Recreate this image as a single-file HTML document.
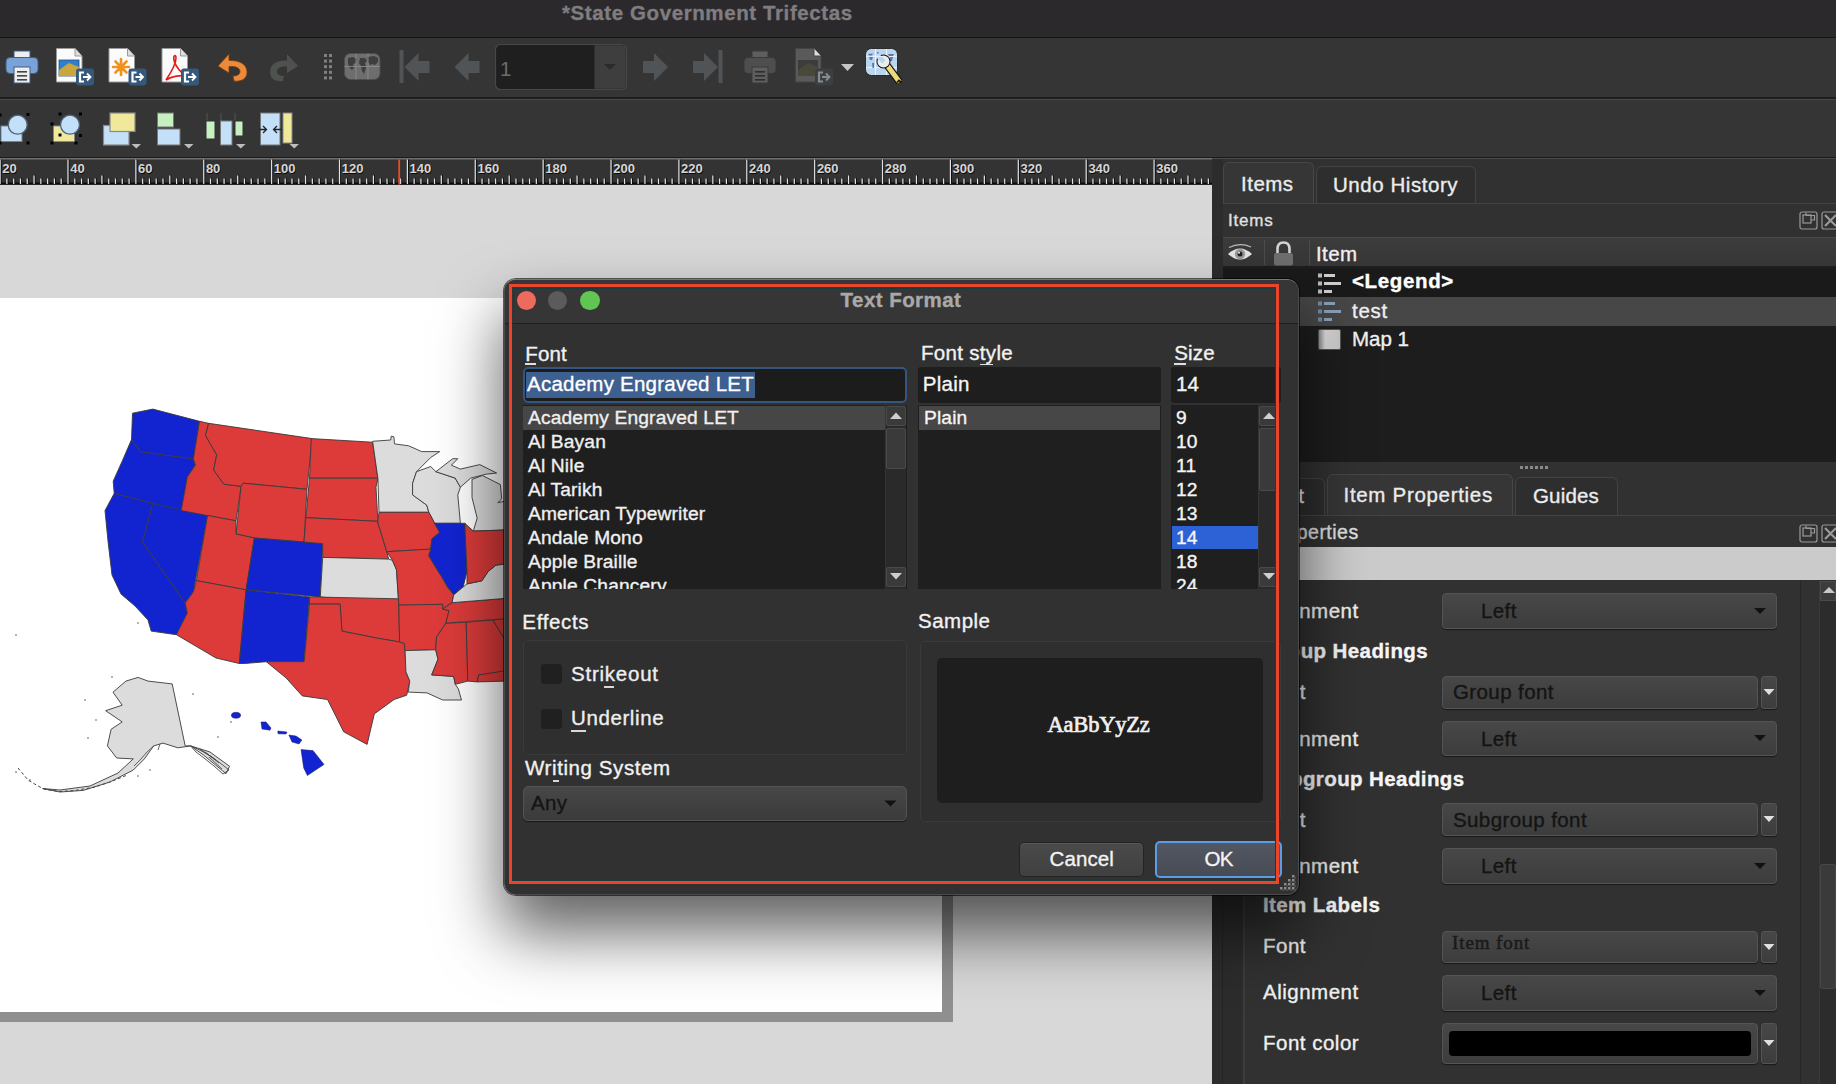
<!DOCTYPE html>
<html><head><meta charset="utf-8">
<style>
*{box-sizing:border-box;margin:0;padding:0}
html,body{width:1836px;height:1084px;overflow:hidden;background:#333;font-family:"Liberation Sans",sans-serif;color:#e6e6e6}
.a{position:absolute}
.t{position:absolute;white-space:nowrap;font-size:19px;letter-spacing:0.7px;line-height:1;-webkit-text-stroke:0.35px currentColor}
</style></head><body>
<!-- title bar -->
<div class="a" style="left:0;top:0;width:1836px;height:37px;background:#2c292d"></div>
<div class="a" style="left:0;top:37px;width:1836px;height:1px;background:#151515"></div>
<div class="t" style="left:562px;top:2.7px;font-size:20.5px;font-weight:bold;color:#7f7d7f;letter-spacing:0.6px">*State Government Trifectas</div>
<!-- toolbar 1 -->
<div class="a" style="left:0;top:38px;width:1836px;height:59px;background:#353535"></div>
<div class="a" style="left:0;top:97px;width:1836px;height:2px;background:#1e1e1e"></div>
<div class="a" style="left:0;top:99px;width:1836px;height:1px;background:#4a4a4a"></div>
<!-- toolbar 2 -->
<div class="a" style="left:0;top:100px;width:1836px;height:57px;background:#353535"></div>
<div class="a" style="left:0;top:157px;width:1836px;height:1px;background:#1a1a1a"></div>
<div class="a" style="left:0;top:158px;width:1836px;height:1px;background:#4a4a4a"></div>
<!--ICONS--><svg class="a" style="left:0;top:38px" width="920" height="120" viewBox="0 38 920 120"><rect x="14" y="51" width="16" height="8" fill="#eeeeee" stroke="#3f5f86" stroke-width="1"/><rect x="6" y="57.5" width="32" height="16" rx="4" fill="#7aa2d6" stroke="#3f5f86" stroke-width="1"/><rect x="14" y="67" width="16" height="16" fill="#eeeeee" stroke="#3f5f86" stroke-width="1"/><g fill="#444"><rect x="17" y="71" width="10" height="1.6"/><rect x="17" y="75" width="10" height="1.6"/><rect x="17" y="79" width="10" height="1.6"/></g><path d="M56.5 48.5H75L82 56V82H56.5Z" fill="#fbfbfb" stroke="#9a9a9a" stroke-width="1"/><path d="M75 48.5V56H82" fill="#ddd" stroke="#9a9a9a" stroke-width="1"/><rect x="59" y="60" width="20" height="16" fill="#2f7fd0" stroke="#24507a" stroke-width="0.8"/><path d="M59 70L69 63L79 67V76H59Z" fill="#c9a63e"/><rect x="76" y="68.5" width="18" height="17" rx="3" fill="#35597a"/><path d="M84 72.5H80V81.5H84" fill="none" stroke="#ffffff" stroke-width="2.2"/><path d="M83 77.0H90M87 73.5L90.5 77.0L87 80.5" fill="none" stroke="#ffffff" stroke-width="1.8"/><path d="M109.0 48.5H127.5L134.5 56V82H109.0Z" fill="#fbfbfb" stroke="#9a9a9a" stroke-width="1"/><path d="M127.5 48.5V56H134.5" fill="#ddd" stroke="#9a9a9a" stroke-width="1"/><g stroke="#f0921e" stroke-width="2.6" stroke-linecap="round"><path d="M121 59V75M113 67H129M115.5 61.5L126.5 72.5M126.5 61.5L115.5 72.5"/></g><circle cx="121" cy="67" r="2.5" fill="#f0921e"/><rect x="128.5" y="68.5" width="18" height="17" rx="3" fill="#35597a"/><path d="M136.5 72.5H132.5V81.5H136.5" fill="none" stroke="#ffffff" stroke-width="2.2"/><path d="M135.5 77.0H142.5M139.5 73.5L143.0 77.0L139.5 80.5" fill="none" stroke="#ffffff" stroke-width="1.8"/><path d="M162.0 48.5H180.5L187.5 56V82H162.0Z" fill="#fbfbfb" stroke="#9a9a9a" stroke-width="1"/><path d="M180.5 48.5V56H187.5" fill="#ddd" stroke="#9a9a9a" stroke-width="1"/><path d="M166 80C170 74 176 64 176 58C176 54 173 55 174 60C175 66 182 74 186 76C181 75 172 76 166 80Z" fill="none" stroke="#e0211a" stroke-width="1.6"/><rect x="181" y="68.5" width="18" height="17" rx="3" fill="#35597a"/><path d="M189 72.5H185V81.5H189" fill="none" stroke="#ffffff" stroke-width="2.2"/><path d="M188 77.0H195M192 73.5L195.5 77.0L192 80.5" fill="none" stroke="#ffffff" stroke-width="1.8"/><path d="M218 66L229 54V60.5C239 60 247 64 247 72C247 79 241 82 234 81L233 76C237 76 240 74.5 240 71.5C240 68 236 66 229 66.5V73Z" fill="#ea8a3a" stroke="#7a3e12" stroke-width="0.8"/><path d="M298 66L287 54V60.5C277 60 270 64 270 72C270 79 276 82 283 81L284 76C280 76 277 74.5 277 71.5C277 68 281 66 287 66.5V73Z" fill="#4d524f"/><g fill="#808080"><rect x="324" y="54.0" width="3" height="3"/><rect x="329" y="54.0" width="3" height="3"/><rect x="324" y="59.6" width="3" height="3"/><rect x="329" y="59.6" width="3" height="3"/><rect x="324" y="65.2" width="3" height="3"/><rect x="329" y="65.2" width="3" height="3"/><rect x="324" y="70.8" width="3" height="3"/><rect x="329" y="70.8" width="3" height="3"/><rect x="324" y="76.4" width="3" height="3"/><rect x="329" y="76.4" width="3" height="3"/></g><rect x="344.5" y="53.5" width="35.5" height="26" rx="6" fill="#6e6e6e" stroke="#4e4e4e"/><g fill="#3e3e3e"><path d="M348 58l5-1 4 2-1 4-3 1 1 4-2 2-3-3-1-4zM360 58l5 0 2 3-2 2 1 5-2 6-2-3-1-5-2-3zM367 57l7-1 4 2 0 4-3 3-3-1-2 1-2-3z"/></g><g stroke="#8a8a8a" stroke-width="0.9"><path d="M344.5 66.5H380M356 53.5V79.5M368 53.5V79.5"/></g><rect x="399.5" y="50" width="4" height="33" fill="#505457"/><path d="M404.5 67L418.5 53V61H429.5V73H418.5V81Z" fill="#505457"/><path d="M454.5 67L468.5 53V61H479.5V73H468.5V81Z" fill="#505457"/><path d="M668 67L654 53V61H643V73H654V81Z" fill="#505457"/><path d="M718 67L704 53V61H693V73H704V81Z" fill="#505457"/><rect x="718.5" y="50" width="4" height="33" fill="#505457"/><rect x="495.5" y="44.5" width="131" height="45" rx="5" fill="#1f1f1f" stroke="#474747" stroke-width="1.2"/><path d="M594.5 45.2H621A4.5 4.5 0 0 1 625.8 49.5V84.5A4.5 4.5 0 0 1 621 88.8H594.5Z" fill="#3e3e3e"/><path d="M604 64H616L610 70Z" fill="#2a2a2a"/><text x="500" y="75.5" font-family="Liberation Sans" font-size="20.5" fill="#6c6c6c">1</text><rect x="752" y="51" width="16" height="8" fill="#5e5e5e" stroke="#3a3a3a" stroke-width="1"/><rect x="744" y="57.5" width="32" height="16" rx="4" fill="#4e4e4e" stroke="#3a3a3a" stroke-width="1"/><rect x="752" y="67" width="16" height="16" fill="#5e5e5e" stroke="#3a3a3a" stroke-width="1"/><g fill="#2e2e2e"><rect x="755" y="71" width="10" height="1.6"/><rect x="755" y="75" width="10" height="1.6"/><rect x="755" y="79" width="10" height="1.6"/></g><path d="M795.5 48.5H814L821 56V82H795.5Z" fill="#5a5a5a" stroke="#444" stroke-width="1"/><path d="M814 48.5V56H821" fill="#ddd" stroke="#444" stroke-width="1"/><rect x="798" y="60" width="20" height="16" fill="#3c3c3c"/><path d="M798 70L808 63L818 67V76H798Z" fill="#4a4838"/><rect x="815" y="68.5" width="18" height="17" rx="3" fill="#3a3f44"/><path d="M823 72.5H819V81.5H823" fill="none" stroke="#8a8a8a" stroke-width="2.2"/><path d="M822 77.0H829M826 73.5L829.5 77.0L826 80.5" fill="none" stroke="#8a8a8a" stroke-width="1.8"/><path d="M841 64H854L847.5 71Z" fill="#c6c6c6"/><rect x="865.5" y="48.5" width="32" height="27" rx="6" fill="#bcd5ef" stroke="#1a1410" stroke-width="0.8"/><g stroke="#eef4fb" stroke-width="1"><path d="M866 56.3H897M866 67.6H897M875.5 49V75M886.5 49V75"/></g><g fill="#5a7aa8"><path d="M868 54l5-0.5-1 2h-3zM869 57h4l-1 3h-2zM872 63h2v5h-1.5zM888 54h6l-1 2h-4zM890 57h3l-1 4h-2zM877 52h1.5v1.5h-1.5z"/></g><defs><mask id="wm"><rect x="860" y="40" width="60" height="60" fill="white"/><rect x="881.2" y="49" width="4.6" height="13" fill="black" transform="rotate(-45 883.5 61.5)"/></mask></defs><path d="M886.5 64.5L899.5 82" stroke="#15120a" stroke-width="7.2"/><path d="M886.5 64.5L899.5 82" stroke="#ecd97c" stroke-width="5"/><path d="M897 82.5l2-2.2 2.5 2" stroke="#15120a" stroke-width="1.6" fill="none"/><g mask="url(#wm)"><circle cx="883.5" cy="61.5" r="7" fill="#141414"/><circle cx="883.5" cy="61.5" r="6" fill="#ececec"/></g><rect x="1" y="126" width="21" height="15.5" fill="#c4e0f8" stroke="#6f8597" stroke-width="1"/><circle cx="17.7" cy="124.7" r="9.5" fill="#c4e0f8" stroke="#4d6478" stroke-width="1.3"/><g fill="#000"><rect x="-1.5" y="113.5" width="3" height="3"/><rect x="26.5" y="113.0" width="3" height="3"/><rect x="26.5" y="141.5" width="3" height="3"/><rect x="-1.5" y="141.5" width="3" height="3"/></g><rect x="53.5" y="126" width="21" height="15.5" fill="#f0e89a" stroke="#888" stroke-width="1"/><circle cx="70" cy="124.7" r="9.5" fill="#c4e0f8" stroke="#4d6478" stroke-width="1.3"/><g fill="#000"><rect x="58.5" y="112.5" width="3" height="3"/><rect x="79.0" y="112.5" width="3" height="3"/><rect x="50.5" y="122.5" width="3" height="3"/><rect x="79.0" y="134.0" width="3" height="3"/><rect x="58.5" y="133.5" width="3" height="3"/><rect x="50.5" y="141.5" width="3" height="3"/><rect x="74.5" y="141.5" width="3" height="3"/></g><rect x="103.5" y="125.5" width="25.5" height="19.5" fill="#c4e0f8" stroke="#888" stroke-width="1.2"/><rect x="110" y="113" width="25" height="18.5" fill="#f0e89a" stroke="#888" stroke-width="1.2"/><path d="M131.5 144H141L136.3 148.5Z" fill="#bdbdbd"/><rect x="157.5" y="113" width="16" height="14" fill="#c6f0c0" stroke="#777" stroke-width="1"/><rect x="157.5" y="129" width="22.5" height="16" fill="#c4e0f8" stroke="#777" stroke-width="1"/><path d="M184 144H193.5L188.8 148.5Z" fill="#bdbdbd"/><g stroke="#555" stroke-width="1"><path d="M207 113V121M221 113V121M235 113V121"/></g><rect x="206" y="121" width="9" height="18" fill="#c6f0c0" stroke="#333" stroke-width="1"/><rect x="220.5" y="121" width="11.5" height="24" fill="#c4e0f8" stroke="#777" stroke-width="1"/><rect x="235" y="121" width="8" height="15" fill="#c6f0c0" stroke="#333" stroke-width="1"/><path d="M236 144H245.6L240.8 148.5Z" fill="#bdbdbd"/><rect x="260.5" y="113" width="19.5" height="32" fill="#c4e0f8" stroke="#777" stroke-width="1"/><rect x="283" y="113" width="9" height="30" fill="#f0e89a" stroke="#888" stroke-width="1"/><g stroke="#222" stroke-width="1.3" fill="none"><path d="M259 129.5H266M263 126L266.5 129.5L263 133M281 129.5H274M277 126L273.5 129.5L277 133"/></g><path d="M289.5 144H299L294.3 148.5Z" fill="#bdbdbd"/></svg><!--/ICONS-->
<!-- ruler -->
<!--RULER--><svg class="a" style="left:0;top:158px" width="1212" height="27" viewBox="0 0 1212 27"><rect width="1212" height="27" fill="#333"/><rect x="0" y="0" width="1212" height="1.5" fill="#707070"/><rect x="0" y="24.5" width="1212" height="1.8" fill="#0c0c0c"/><rect x="0.60" y="1.5" width="1" height="24.5" fill="#0c0c0c"/><rect x="-0.50" y="1.5" width="1.2" height="24.5" fill="#e2e2e2"/><rect x="7.39" y="20" width="1" height="6" fill="#0c0c0c"/><rect x="6.29" y="20.5" width="1.2" height="5.5" fill="#e2e2e2"/><rect x="14.18" y="20" width="1" height="6" fill="#0c0c0c"/><rect x="13.08" y="20.5" width="1.2" height="5.5" fill="#e2e2e2"/><rect x="20.96" y="20" width="1" height="6" fill="#0c0c0c"/><rect x="19.86" y="20.5" width="1.2" height="5.5" fill="#e2e2e2"/><rect x="27.75" y="20" width="1" height="6" fill="#0c0c0c"/><rect x="26.65" y="20.5" width="1.2" height="5.5" fill="#e2e2e2"/><rect x="34.54" y="17" width="1" height="9" fill="#0c0c0c"/><rect x="33.44" y="17.5" width="1.2" height="8.5" fill="#e2e2e2"/><rect x="41.33" y="20" width="1" height="6" fill="#0c0c0c"/><rect x="40.23" y="20.5" width="1.2" height="5.5" fill="#e2e2e2"/><rect x="48.12" y="20" width="1" height="6" fill="#0c0c0c"/><rect x="47.02" y="20.5" width="1.2" height="5.5" fill="#e2e2e2"/><rect x="54.90" y="20" width="1" height="6" fill="#0c0c0c"/><rect x="53.80" y="20.5" width="1.2" height="5.5" fill="#e2e2e2"/><rect x="61.69" y="20" width="1" height="6" fill="#0c0c0c"/><rect x="60.59" y="20.5" width="1.2" height="5.5" fill="#e2e2e2"/><rect x="68.48" y="1.5" width="1" height="24.5" fill="#0c0c0c"/><rect x="67.38" y="1.5" width="1.2" height="24.5" fill="#e2e2e2"/><rect x="75.27" y="20" width="1" height="6" fill="#0c0c0c"/><rect x="74.17" y="20.5" width="1.2" height="5.5" fill="#e2e2e2"/><rect x="82.06" y="20" width="1" height="6" fill="#0c0c0c"/><rect x="80.96" y="20.5" width="1.2" height="5.5" fill="#e2e2e2"/><rect x="88.84" y="20" width="1" height="6" fill="#0c0c0c"/><rect x="87.74" y="20.5" width="1.2" height="5.5" fill="#e2e2e2"/><rect x="95.63" y="20" width="1" height="6" fill="#0c0c0c"/><rect x="94.53" y="20.5" width="1.2" height="5.5" fill="#e2e2e2"/><rect x="102.42" y="17" width="1" height="9" fill="#0c0c0c"/><rect x="101.32" y="17.5" width="1.2" height="8.5" fill="#e2e2e2"/><rect x="109.21" y="20" width="1" height="6" fill="#0c0c0c"/><rect x="108.11" y="20.5" width="1.2" height="5.5" fill="#e2e2e2"/><rect x="116.00" y="20" width="1" height="6" fill="#0c0c0c"/><rect x="114.90" y="20.5" width="1.2" height="5.5" fill="#e2e2e2"/><rect x="122.78" y="20" width="1" height="6" fill="#0c0c0c"/><rect x="121.68" y="20.5" width="1.2" height="5.5" fill="#e2e2e2"/><rect x="129.57" y="20" width="1" height="6" fill="#0c0c0c"/><rect x="128.47" y="20.5" width="1.2" height="5.5" fill="#e2e2e2"/><rect x="136.36" y="1.5" width="1" height="24.5" fill="#0c0c0c"/><rect x="135.26" y="1.5" width="1.2" height="24.5" fill="#e2e2e2"/><rect x="143.15" y="20" width="1" height="6" fill="#0c0c0c"/><rect x="142.05" y="20.5" width="1.2" height="5.5" fill="#e2e2e2"/><rect x="149.94" y="20" width="1" height="6" fill="#0c0c0c"/><rect x="148.84" y="20.5" width="1.2" height="5.5" fill="#e2e2e2"/><rect x="156.72" y="20" width="1" height="6" fill="#0c0c0c"/><rect x="155.62" y="20.5" width="1.2" height="5.5" fill="#e2e2e2"/><rect x="163.51" y="20" width="1" height="6" fill="#0c0c0c"/><rect x="162.41" y="20.5" width="1.2" height="5.5" fill="#e2e2e2"/><rect x="170.30" y="17" width="1" height="9" fill="#0c0c0c"/><rect x="169.20" y="17.5" width="1.2" height="8.5" fill="#e2e2e2"/><rect x="177.09" y="20" width="1" height="6" fill="#0c0c0c"/><rect x="175.99" y="20.5" width="1.2" height="5.5" fill="#e2e2e2"/><rect x="183.88" y="20" width="1" height="6" fill="#0c0c0c"/><rect x="182.78" y="20.5" width="1.2" height="5.5" fill="#e2e2e2"/><rect x="190.66" y="20" width="1" height="6" fill="#0c0c0c"/><rect x="189.56" y="20.5" width="1.2" height="5.5" fill="#e2e2e2"/><rect x="197.45" y="20" width="1" height="6" fill="#0c0c0c"/><rect x="196.35" y="20.5" width="1.2" height="5.5" fill="#e2e2e2"/><rect x="204.24" y="1.5" width="1" height="24.5" fill="#0c0c0c"/><rect x="203.14" y="1.5" width="1.2" height="24.5" fill="#e2e2e2"/><rect x="211.03" y="20" width="1" height="6" fill="#0c0c0c"/><rect x="209.93" y="20.5" width="1.2" height="5.5" fill="#e2e2e2"/><rect x="217.82" y="20" width="1" height="6" fill="#0c0c0c"/><rect x="216.72" y="20.5" width="1.2" height="5.5" fill="#e2e2e2"/><rect x="224.60" y="20" width="1" height="6" fill="#0c0c0c"/><rect x="223.50" y="20.5" width="1.2" height="5.5" fill="#e2e2e2"/><rect x="231.39" y="20" width="1" height="6" fill="#0c0c0c"/><rect x="230.29" y="20.5" width="1.2" height="5.5" fill="#e2e2e2"/><rect x="238.18" y="17" width="1" height="9" fill="#0c0c0c"/><rect x="237.08" y="17.5" width="1.2" height="8.5" fill="#e2e2e2"/><rect x="244.97" y="20" width="1" height="6" fill="#0c0c0c"/><rect x="243.87" y="20.5" width="1.2" height="5.5" fill="#e2e2e2"/><rect x="251.76" y="20" width="1" height="6" fill="#0c0c0c"/><rect x="250.66" y="20.5" width="1.2" height="5.5" fill="#e2e2e2"/><rect x="258.54" y="20" width="1" height="6" fill="#0c0c0c"/><rect x="257.44" y="20.5" width="1.2" height="5.5" fill="#e2e2e2"/><rect x="265.33" y="20" width="1" height="6" fill="#0c0c0c"/><rect x="264.23" y="20.5" width="1.2" height="5.5" fill="#e2e2e2"/><rect x="272.12" y="1.5" width="1" height="24.5" fill="#0c0c0c"/><rect x="271.02" y="1.5" width="1.2" height="24.5" fill="#e2e2e2"/><rect x="278.91" y="20" width="1" height="6" fill="#0c0c0c"/><rect x="277.81" y="20.5" width="1.2" height="5.5" fill="#e2e2e2"/><rect x="285.70" y="20" width="1" height="6" fill="#0c0c0c"/><rect x="284.60" y="20.5" width="1.2" height="5.5" fill="#e2e2e2"/><rect x="292.48" y="20" width="1" height="6" fill="#0c0c0c"/><rect x="291.38" y="20.5" width="1.2" height="5.5" fill="#e2e2e2"/><rect x="299.27" y="20" width="1" height="6" fill="#0c0c0c"/><rect x="298.17" y="20.5" width="1.2" height="5.5" fill="#e2e2e2"/><rect x="306.06" y="17" width="1" height="9" fill="#0c0c0c"/><rect x="304.96" y="17.5" width="1.2" height="8.5" fill="#e2e2e2"/><rect x="312.85" y="20" width="1" height="6" fill="#0c0c0c"/><rect x="311.75" y="20.5" width="1.2" height="5.5" fill="#e2e2e2"/><rect x="319.64" y="20" width="1" height="6" fill="#0c0c0c"/><rect x="318.54" y="20.5" width="1.2" height="5.5" fill="#e2e2e2"/><rect x="326.42" y="20" width="1" height="6" fill="#0c0c0c"/><rect x="325.32" y="20.5" width="1.2" height="5.5" fill="#e2e2e2"/><rect x="333.21" y="20" width="1" height="6" fill="#0c0c0c"/><rect x="332.11" y="20.5" width="1.2" height="5.5" fill="#e2e2e2"/><rect x="340.00" y="1.5" width="1" height="24.5" fill="#0c0c0c"/><rect x="338.90" y="1.5" width="1.2" height="24.5" fill="#e2e2e2"/><rect x="346.79" y="20" width="1" height="6" fill="#0c0c0c"/><rect x="345.69" y="20.5" width="1.2" height="5.5" fill="#e2e2e2"/><rect x="353.58" y="20" width="1" height="6" fill="#0c0c0c"/><rect x="352.48" y="20.5" width="1.2" height="5.5" fill="#e2e2e2"/><rect x="360.36" y="20" width="1" height="6" fill="#0c0c0c"/><rect x="359.26" y="20.5" width="1.2" height="5.5" fill="#e2e2e2"/><rect x="367.15" y="20" width="1" height="6" fill="#0c0c0c"/><rect x="366.05" y="20.5" width="1.2" height="5.5" fill="#e2e2e2"/><rect x="373.94" y="17" width="1" height="9" fill="#0c0c0c"/><rect x="372.84" y="17.5" width="1.2" height="8.5" fill="#e2e2e2"/><rect x="380.73" y="20" width="1" height="6" fill="#0c0c0c"/><rect x="379.63" y="20.5" width="1.2" height="5.5" fill="#e2e2e2"/><rect x="387.52" y="20" width="1" height="6" fill="#0c0c0c"/><rect x="386.42" y="20.5" width="1.2" height="5.5" fill="#e2e2e2"/><rect x="394.30" y="20" width="1" height="6" fill="#0c0c0c"/><rect x="393.20" y="20.5" width="1.2" height="5.5" fill="#e2e2e2"/><rect x="401.09" y="20" width="1" height="6" fill="#0c0c0c"/><rect x="399.99" y="20.5" width="1.2" height="5.5" fill="#e2e2e2"/><rect x="407.88" y="1.5" width="1" height="24.5" fill="#0c0c0c"/><rect x="406.78" y="1.5" width="1.2" height="24.5" fill="#e2e2e2"/><rect x="414.67" y="20" width="1" height="6" fill="#0c0c0c"/><rect x="413.57" y="20.5" width="1.2" height="5.5" fill="#e2e2e2"/><rect x="421.46" y="20" width="1" height="6" fill="#0c0c0c"/><rect x="420.36" y="20.5" width="1.2" height="5.5" fill="#e2e2e2"/><rect x="428.24" y="20" width="1" height="6" fill="#0c0c0c"/><rect x="427.14" y="20.5" width="1.2" height="5.5" fill="#e2e2e2"/><rect x="435.03" y="20" width="1" height="6" fill="#0c0c0c"/><rect x="433.93" y="20.5" width="1.2" height="5.5" fill="#e2e2e2"/><rect x="441.82" y="17" width="1" height="9" fill="#0c0c0c"/><rect x="440.72" y="17.5" width="1.2" height="8.5" fill="#e2e2e2"/><rect x="448.61" y="20" width="1" height="6" fill="#0c0c0c"/><rect x="447.51" y="20.5" width="1.2" height="5.5" fill="#e2e2e2"/><rect x="455.40" y="20" width="1" height="6" fill="#0c0c0c"/><rect x="454.30" y="20.5" width="1.2" height="5.5" fill="#e2e2e2"/><rect x="462.18" y="20" width="1" height="6" fill="#0c0c0c"/><rect x="461.08" y="20.5" width="1.2" height="5.5" fill="#e2e2e2"/><rect x="468.97" y="20" width="1" height="6" fill="#0c0c0c"/><rect x="467.87" y="20.5" width="1.2" height="5.5" fill="#e2e2e2"/><rect x="475.76" y="1.5" width="1" height="24.5" fill="#0c0c0c"/><rect x="474.66" y="1.5" width="1.2" height="24.5" fill="#e2e2e2"/><rect x="482.55" y="20" width="1" height="6" fill="#0c0c0c"/><rect x="481.45" y="20.5" width="1.2" height="5.5" fill="#e2e2e2"/><rect x="489.34" y="20" width="1" height="6" fill="#0c0c0c"/><rect x="488.24" y="20.5" width="1.2" height="5.5" fill="#e2e2e2"/><rect x="496.12" y="20" width="1" height="6" fill="#0c0c0c"/><rect x="495.02" y="20.5" width="1.2" height="5.5" fill="#e2e2e2"/><rect x="502.91" y="20" width="1" height="6" fill="#0c0c0c"/><rect x="501.81" y="20.5" width="1.2" height="5.5" fill="#e2e2e2"/><rect x="509.70" y="17" width="1" height="9" fill="#0c0c0c"/><rect x="508.60" y="17.5" width="1.2" height="8.5" fill="#e2e2e2"/><rect x="516.49" y="20" width="1" height="6" fill="#0c0c0c"/><rect x="515.39" y="20.5" width="1.2" height="5.5" fill="#e2e2e2"/><rect x="523.28" y="20" width="1" height="6" fill="#0c0c0c"/><rect x="522.18" y="20.5" width="1.2" height="5.5" fill="#e2e2e2"/><rect x="530.06" y="20" width="1" height="6" fill="#0c0c0c"/><rect x="528.96" y="20.5" width="1.2" height="5.5" fill="#e2e2e2"/><rect x="536.85" y="20" width="1" height="6" fill="#0c0c0c"/><rect x="535.75" y="20.5" width="1.2" height="5.5" fill="#e2e2e2"/><rect x="543.64" y="1.5" width="1" height="24.5" fill="#0c0c0c"/><rect x="542.54" y="1.5" width="1.2" height="24.5" fill="#e2e2e2"/><rect x="550.43" y="20" width="1" height="6" fill="#0c0c0c"/><rect x="549.33" y="20.5" width="1.2" height="5.5" fill="#e2e2e2"/><rect x="557.22" y="20" width="1" height="6" fill="#0c0c0c"/><rect x="556.12" y="20.5" width="1.2" height="5.5" fill="#e2e2e2"/><rect x="564.00" y="20" width="1" height="6" fill="#0c0c0c"/><rect x="562.90" y="20.5" width="1.2" height="5.5" fill="#e2e2e2"/><rect x="570.79" y="20" width="1" height="6" fill="#0c0c0c"/><rect x="569.69" y="20.5" width="1.2" height="5.5" fill="#e2e2e2"/><rect x="577.58" y="17" width="1" height="9" fill="#0c0c0c"/><rect x="576.48" y="17.5" width="1.2" height="8.5" fill="#e2e2e2"/><rect x="584.37" y="20" width="1" height="6" fill="#0c0c0c"/><rect x="583.27" y="20.5" width="1.2" height="5.5" fill="#e2e2e2"/><rect x="591.16" y="20" width="1" height="6" fill="#0c0c0c"/><rect x="590.06" y="20.5" width="1.2" height="5.5" fill="#e2e2e2"/><rect x="597.94" y="20" width="1" height="6" fill="#0c0c0c"/><rect x="596.84" y="20.5" width="1.2" height="5.5" fill="#e2e2e2"/><rect x="604.73" y="20" width="1" height="6" fill="#0c0c0c"/><rect x="603.63" y="20.5" width="1.2" height="5.5" fill="#e2e2e2"/><rect x="611.52" y="1.5" width="1" height="24.5" fill="#0c0c0c"/><rect x="610.42" y="1.5" width="1.2" height="24.5" fill="#e2e2e2"/><rect x="618.31" y="20" width="1" height="6" fill="#0c0c0c"/><rect x="617.21" y="20.5" width="1.2" height="5.5" fill="#e2e2e2"/><rect x="625.10" y="20" width="1" height="6" fill="#0c0c0c"/><rect x="624.00" y="20.5" width="1.2" height="5.5" fill="#e2e2e2"/><rect x="631.88" y="20" width="1" height="6" fill="#0c0c0c"/><rect x="630.78" y="20.5" width="1.2" height="5.5" fill="#e2e2e2"/><rect x="638.67" y="20" width="1" height="6" fill="#0c0c0c"/><rect x="637.57" y="20.5" width="1.2" height="5.5" fill="#e2e2e2"/><rect x="645.46" y="17" width="1" height="9" fill="#0c0c0c"/><rect x="644.36" y="17.5" width="1.2" height="8.5" fill="#e2e2e2"/><rect x="652.25" y="20" width="1" height="6" fill="#0c0c0c"/><rect x="651.15" y="20.5" width="1.2" height="5.5" fill="#e2e2e2"/><rect x="659.04" y="20" width="1" height="6" fill="#0c0c0c"/><rect x="657.94" y="20.5" width="1.2" height="5.5" fill="#e2e2e2"/><rect x="665.82" y="20" width="1" height="6" fill="#0c0c0c"/><rect x="664.72" y="20.5" width="1.2" height="5.5" fill="#e2e2e2"/><rect x="672.61" y="20" width="1" height="6" fill="#0c0c0c"/><rect x="671.51" y="20.5" width="1.2" height="5.5" fill="#e2e2e2"/><rect x="679.40" y="1.5" width="1" height="24.5" fill="#0c0c0c"/><rect x="678.30" y="1.5" width="1.2" height="24.5" fill="#e2e2e2"/><rect x="686.19" y="20" width="1" height="6" fill="#0c0c0c"/><rect x="685.09" y="20.5" width="1.2" height="5.5" fill="#e2e2e2"/><rect x="692.98" y="20" width="1" height="6" fill="#0c0c0c"/><rect x="691.88" y="20.5" width="1.2" height="5.5" fill="#e2e2e2"/><rect x="699.76" y="20" width="1" height="6" fill="#0c0c0c"/><rect x="698.66" y="20.5" width="1.2" height="5.5" fill="#e2e2e2"/><rect x="706.55" y="20" width="1" height="6" fill="#0c0c0c"/><rect x="705.45" y="20.5" width="1.2" height="5.5" fill="#e2e2e2"/><rect x="713.34" y="17" width="1" height="9" fill="#0c0c0c"/><rect x="712.24" y="17.5" width="1.2" height="8.5" fill="#e2e2e2"/><rect x="720.13" y="20" width="1" height="6" fill="#0c0c0c"/><rect x="719.03" y="20.5" width="1.2" height="5.5" fill="#e2e2e2"/><rect x="726.92" y="20" width="1" height="6" fill="#0c0c0c"/><rect x="725.82" y="20.5" width="1.2" height="5.5" fill="#e2e2e2"/><rect x="733.70" y="20" width="1" height="6" fill="#0c0c0c"/><rect x="732.60" y="20.5" width="1.2" height="5.5" fill="#e2e2e2"/><rect x="740.49" y="20" width="1" height="6" fill="#0c0c0c"/><rect x="739.39" y="20.5" width="1.2" height="5.5" fill="#e2e2e2"/><rect x="747.28" y="1.5" width="1" height="24.5" fill="#0c0c0c"/><rect x="746.18" y="1.5" width="1.2" height="24.5" fill="#e2e2e2"/><rect x="754.07" y="20" width="1" height="6" fill="#0c0c0c"/><rect x="752.97" y="20.5" width="1.2" height="5.5" fill="#e2e2e2"/><rect x="760.86" y="20" width="1" height="6" fill="#0c0c0c"/><rect x="759.76" y="20.5" width="1.2" height="5.5" fill="#e2e2e2"/><rect x="767.64" y="20" width="1" height="6" fill="#0c0c0c"/><rect x="766.54" y="20.5" width="1.2" height="5.5" fill="#e2e2e2"/><rect x="774.43" y="20" width="1" height="6" fill="#0c0c0c"/><rect x="773.33" y="20.5" width="1.2" height="5.5" fill="#e2e2e2"/><rect x="781.22" y="17" width="1" height="9" fill="#0c0c0c"/><rect x="780.12" y="17.5" width="1.2" height="8.5" fill="#e2e2e2"/><rect x="788.01" y="20" width="1" height="6" fill="#0c0c0c"/><rect x="786.91" y="20.5" width="1.2" height="5.5" fill="#e2e2e2"/><rect x="794.80" y="20" width="1" height="6" fill="#0c0c0c"/><rect x="793.70" y="20.5" width="1.2" height="5.5" fill="#e2e2e2"/><rect x="801.58" y="20" width="1" height="6" fill="#0c0c0c"/><rect x="800.48" y="20.5" width="1.2" height="5.5" fill="#e2e2e2"/><rect x="808.37" y="20" width="1" height="6" fill="#0c0c0c"/><rect x="807.27" y="20.5" width="1.2" height="5.5" fill="#e2e2e2"/><rect x="815.16" y="1.5" width="1" height="24.5" fill="#0c0c0c"/><rect x="814.06" y="1.5" width="1.2" height="24.5" fill="#e2e2e2"/><rect x="821.95" y="20" width="1" height="6" fill="#0c0c0c"/><rect x="820.85" y="20.5" width="1.2" height="5.5" fill="#e2e2e2"/><rect x="828.74" y="20" width="1" height="6" fill="#0c0c0c"/><rect x="827.64" y="20.5" width="1.2" height="5.5" fill="#e2e2e2"/><rect x="835.52" y="20" width="1" height="6" fill="#0c0c0c"/><rect x="834.42" y="20.5" width="1.2" height="5.5" fill="#e2e2e2"/><rect x="842.31" y="20" width="1" height="6" fill="#0c0c0c"/><rect x="841.21" y="20.5" width="1.2" height="5.5" fill="#e2e2e2"/><rect x="849.10" y="17" width="1" height="9" fill="#0c0c0c"/><rect x="848.00" y="17.5" width="1.2" height="8.5" fill="#e2e2e2"/><rect x="855.89" y="20" width="1" height="6" fill="#0c0c0c"/><rect x="854.79" y="20.5" width="1.2" height="5.5" fill="#e2e2e2"/><rect x="862.68" y="20" width="1" height="6" fill="#0c0c0c"/><rect x="861.58" y="20.5" width="1.2" height="5.5" fill="#e2e2e2"/><rect x="869.46" y="20" width="1" height="6" fill="#0c0c0c"/><rect x="868.36" y="20.5" width="1.2" height="5.5" fill="#e2e2e2"/><rect x="876.25" y="20" width="1" height="6" fill="#0c0c0c"/><rect x="875.15" y="20.5" width="1.2" height="5.5" fill="#e2e2e2"/><rect x="883.04" y="1.5" width="1" height="24.5" fill="#0c0c0c"/><rect x="881.94" y="1.5" width="1.2" height="24.5" fill="#e2e2e2"/><rect x="889.83" y="20" width="1" height="6" fill="#0c0c0c"/><rect x="888.73" y="20.5" width="1.2" height="5.5" fill="#e2e2e2"/><rect x="896.62" y="20" width="1" height="6" fill="#0c0c0c"/><rect x="895.52" y="20.5" width="1.2" height="5.5" fill="#e2e2e2"/><rect x="903.40" y="20" width="1" height="6" fill="#0c0c0c"/><rect x="902.30" y="20.5" width="1.2" height="5.5" fill="#e2e2e2"/><rect x="910.19" y="20" width="1" height="6" fill="#0c0c0c"/><rect x="909.09" y="20.5" width="1.2" height="5.5" fill="#e2e2e2"/><rect x="916.98" y="17" width="1" height="9" fill="#0c0c0c"/><rect x="915.88" y="17.5" width="1.2" height="8.5" fill="#e2e2e2"/><rect x="923.77" y="20" width="1" height="6" fill="#0c0c0c"/><rect x="922.67" y="20.5" width="1.2" height="5.5" fill="#e2e2e2"/><rect x="930.56" y="20" width="1" height="6" fill="#0c0c0c"/><rect x="929.46" y="20.5" width="1.2" height="5.5" fill="#e2e2e2"/><rect x="937.34" y="20" width="1" height="6" fill="#0c0c0c"/><rect x="936.24" y="20.5" width="1.2" height="5.5" fill="#e2e2e2"/><rect x="944.13" y="20" width="1" height="6" fill="#0c0c0c"/><rect x="943.03" y="20.5" width="1.2" height="5.5" fill="#e2e2e2"/><rect x="950.92" y="1.5" width="1" height="24.5" fill="#0c0c0c"/><rect x="949.82" y="1.5" width="1.2" height="24.5" fill="#e2e2e2"/><rect x="957.71" y="20" width="1" height="6" fill="#0c0c0c"/><rect x="956.61" y="20.5" width="1.2" height="5.5" fill="#e2e2e2"/><rect x="964.50" y="20" width="1" height="6" fill="#0c0c0c"/><rect x="963.40" y="20.5" width="1.2" height="5.5" fill="#e2e2e2"/><rect x="971.28" y="20" width="1" height="6" fill="#0c0c0c"/><rect x="970.18" y="20.5" width="1.2" height="5.5" fill="#e2e2e2"/><rect x="978.07" y="20" width="1" height="6" fill="#0c0c0c"/><rect x="976.97" y="20.5" width="1.2" height="5.5" fill="#e2e2e2"/><rect x="984.86" y="17" width="1" height="9" fill="#0c0c0c"/><rect x="983.76" y="17.5" width="1.2" height="8.5" fill="#e2e2e2"/><rect x="991.65" y="20" width="1" height="6" fill="#0c0c0c"/><rect x="990.55" y="20.5" width="1.2" height="5.5" fill="#e2e2e2"/><rect x="998.44" y="20" width="1" height="6" fill="#0c0c0c"/><rect x="997.34" y="20.5" width="1.2" height="5.5" fill="#e2e2e2"/><rect x="1005.22" y="20" width="1" height="6" fill="#0c0c0c"/><rect x="1004.12" y="20.5" width="1.2" height="5.5" fill="#e2e2e2"/><rect x="1012.01" y="20" width="1" height="6" fill="#0c0c0c"/><rect x="1010.91" y="20.5" width="1.2" height="5.5" fill="#e2e2e2"/><rect x="1018.80" y="1.5" width="1" height="24.5" fill="#0c0c0c"/><rect x="1017.70" y="1.5" width="1.2" height="24.5" fill="#e2e2e2"/><rect x="1025.59" y="20" width="1" height="6" fill="#0c0c0c"/><rect x="1024.49" y="20.5" width="1.2" height="5.5" fill="#e2e2e2"/><rect x="1032.38" y="20" width="1" height="6" fill="#0c0c0c"/><rect x="1031.28" y="20.5" width="1.2" height="5.5" fill="#e2e2e2"/><rect x="1039.16" y="20" width="1" height="6" fill="#0c0c0c"/><rect x="1038.06" y="20.5" width="1.2" height="5.5" fill="#e2e2e2"/><rect x="1045.95" y="20" width="1" height="6" fill="#0c0c0c"/><rect x="1044.85" y="20.5" width="1.2" height="5.5" fill="#e2e2e2"/><rect x="1052.74" y="17" width="1" height="9" fill="#0c0c0c"/><rect x="1051.64" y="17.5" width="1.2" height="8.5" fill="#e2e2e2"/><rect x="1059.53" y="20" width="1" height="6" fill="#0c0c0c"/><rect x="1058.43" y="20.5" width="1.2" height="5.5" fill="#e2e2e2"/><rect x="1066.32" y="20" width="1" height="6" fill="#0c0c0c"/><rect x="1065.22" y="20.5" width="1.2" height="5.5" fill="#e2e2e2"/><rect x="1073.10" y="20" width="1" height="6" fill="#0c0c0c"/><rect x="1072.00" y="20.5" width="1.2" height="5.5" fill="#e2e2e2"/><rect x="1079.89" y="20" width="1" height="6" fill="#0c0c0c"/><rect x="1078.79" y="20.5" width="1.2" height="5.5" fill="#e2e2e2"/><rect x="1086.68" y="1.5" width="1" height="24.5" fill="#0c0c0c"/><rect x="1085.58" y="1.5" width="1.2" height="24.5" fill="#e2e2e2"/><rect x="1093.47" y="20" width="1" height="6" fill="#0c0c0c"/><rect x="1092.37" y="20.5" width="1.2" height="5.5" fill="#e2e2e2"/><rect x="1100.26" y="20" width="1" height="6" fill="#0c0c0c"/><rect x="1099.16" y="20.5" width="1.2" height="5.5" fill="#e2e2e2"/><rect x="1107.04" y="20" width="1" height="6" fill="#0c0c0c"/><rect x="1105.94" y="20.5" width="1.2" height="5.5" fill="#e2e2e2"/><rect x="1113.83" y="20" width="1" height="6" fill="#0c0c0c"/><rect x="1112.73" y="20.5" width="1.2" height="5.5" fill="#e2e2e2"/><rect x="1120.62" y="17" width="1" height="9" fill="#0c0c0c"/><rect x="1119.52" y="17.5" width="1.2" height="8.5" fill="#e2e2e2"/><rect x="1127.41" y="20" width="1" height="6" fill="#0c0c0c"/><rect x="1126.31" y="20.5" width="1.2" height="5.5" fill="#e2e2e2"/><rect x="1134.20" y="20" width="1" height="6" fill="#0c0c0c"/><rect x="1133.10" y="20.5" width="1.2" height="5.5" fill="#e2e2e2"/><rect x="1140.98" y="20" width="1" height="6" fill="#0c0c0c"/><rect x="1139.88" y="20.5" width="1.2" height="5.5" fill="#e2e2e2"/><rect x="1147.77" y="20" width="1" height="6" fill="#0c0c0c"/><rect x="1146.67" y="20.5" width="1.2" height="5.5" fill="#e2e2e2"/><rect x="1154.56" y="1.5" width="1" height="24.5" fill="#0c0c0c"/><rect x="1153.46" y="1.5" width="1.2" height="24.5" fill="#e2e2e2"/><rect x="1161.35" y="20" width="1" height="6" fill="#0c0c0c"/><rect x="1160.25" y="20.5" width="1.2" height="5.5" fill="#e2e2e2"/><rect x="1168.14" y="20" width="1" height="6" fill="#0c0c0c"/><rect x="1167.04" y="20.5" width="1.2" height="5.5" fill="#e2e2e2"/><rect x="1174.92" y="20" width="1" height="6" fill="#0c0c0c"/><rect x="1173.82" y="20.5" width="1.2" height="5.5" fill="#e2e2e2"/><rect x="1181.71" y="20" width="1" height="6" fill="#0c0c0c"/><rect x="1180.61" y="20.5" width="1.2" height="5.5" fill="#e2e2e2"/><rect x="1188.50" y="17" width="1" height="9" fill="#0c0c0c"/><rect x="1187.40" y="17.5" width="1.2" height="8.5" fill="#e2e2e2"/><rect x="1195.29" y="20" width="1" height="6" fill="#0c0c0c"/><rect x="1194.19" y="20.5" width="1.2" height="5.5" fill="#e2e2e2"/><rect x="1202.08" y="20" width="1" height="6" fill="#0c0c0c"/><rect x="1200.98" y="20.5" width="1.2" height="5.5" fill="#e2e2e2"/><rect x="1208.86" y="20" width="1" height="6" fill="#0c0c0c"/><rect x="1207.76" y="20.5" width="1.2" height="5.5" fill="#e2e2e2"/><g font-family="Liberation Sans" font-size="13" font-weight="bold" fill="#0a0a0a"><text x="3.0" y="15.6">20</text><text x="70.9" y="15.6">40</text><text x="138.8" y="15.6">60</text><text x="206.6" y="15.6">80</text><text x="274.5" y="15.6">100</text><text x="342.4" y="15.6">120</text><text x="410.3" y="15.6">140</text><text x="478.2" y="15.6">160</text><text x="546.0" y="15.6">180</text><text x="613.9" y="15.6">200</text><text x="681.8" y="15.6">220</text><text x="749.7" y="15.6">240</text><text x="817.6" y="15.6">260</text><text x="885.4" y="15.6">280</text><text x="953.3" y="15.6">300</text><text x="1021.2" y="15.6">320</text><text x="1089.1" y="15.6">340</text><text x="1157.0" y="15.6">360</text></g><g font-family="Liberation Sans" font-size="13" font-weight="bold" fill="#d6d6d6"><text x="2.3" y="14.8">20</text><text x="70.2" y="14.8">40</text><text x="138.1" y="14.8">60</text><text x="205.9" y="14.8">80</text><text x="273.8" y="14.8">100</text><text x="341.7" y="14.8">120</text><text x="409.6" y="14.8">140</text><text x="477.5" y="14.8">160</text><text x="545.3" y="14.8">180</text><text x="613.2" y="14.8">200</text><text x="681.1" y="14.8">220</text><text x="749.0" y="14.8">240</text><text x="816.9" y="14.8">260</text><text x="884.7" y="14.8">280</text><text x="952.6" y="14.8">300</text><text x="1020.5" y="14.8">320</text><text x="1088.4" y="14.8">340</text><text x="1156.3" y="14.8">360</text></g><rect x="398.3" y="1.5" width="1.8" height="25" fill="#f04a25"/></svg><!--/RULER-->
<!-- canvas -->
<div class="a" style="left:0;top:185px;width:1212px;height:899px;background:#d8d8d8"></div>
<div class="a" style="left:0;top:308px;width:953px;height:714px;background:#8f8f8f"></div>
<div class="a" style="left:0;top:298px;width:942px;height:714px;background:#fff"></div>
<!--MAP--><svg class="a" style="left:0;top:297px" width="942" height="715" viewBox="0 297 942 715"><g stroke="#3a3a3a" stroke-width="0.9" stroke-linejoin="round"><polygon points="132.5,413.2 152.8,409.1 199.5,421.3 193.4,458.9 140.6,451.8 131.5,439.6" fill="#1224d0"/><polygon points="131.5,439.6 140.6,451.8 193.4,458.9 195.4,465 187.3,477.1 181.2,510.6 114.2,493.4 113.2,481.2 122.3,460.9" fill="#1224d0"/><polygon points="114.2,493.4 152.8,503.3 142.6,542 185.2,603 187.3,613 176.4,634.7 151.2,631.1 148,620 135,606 121,594 112,575 108.1,542 105,510.6" fill="#1224d0"/><polygon points="152.8,503.3 207.6,515.5 193.4,591.8 185.2,603 142.6,542" fill="#1224d0"/><polygon points="199.5,421.3 208.6,423.3 205.5,435.5 216.7,454.8 213.7,470 223.8,484.2 241.1,486.3 236,520.8 181.2,510.6 187.3,477.1 195.4,465 193.4,458.9" fill="#dc3b3a"/><polygon points="208.6,423.3 312.1,438.6 307,489.3 243.1,483.2 241.1,486.3 223.8,484.2 213.7,470 216.7,454.8 205.5,435.5" fill="#dc3b3a"/><polygon points="243.1,483.2 307,489.3 304,542 254.3,538 236,534 241.1,486.3" fill="#dc3b3a"/><polygon points="207.6,515.5 236,520.8 236,534 254.3,538 246.1,589.8 196.4,580.6" fill="#dc3b3a"/><polygon points="254.3,538 322.7,543.6 320.3,596.9 246.1,589.8" fill="#1224d0"/><polygon points="196.4,580.6 246.1,589.8 239.3,663.5 216,658 176.4,634.7 187.3,613 185.2,603 193.4,591.8" fill="#dc3b3a"/><polygon points="246.1,589.8 309.5,596.9 304.1,661.7 266.3,661.7 244.7,663.5 239.3,663.5" fill="#1224d0"/><polygon points="311.3,438.6 372.5,442.2 377.9,478.2 309.5,478.2" fill="#dc3b3a"/><polygon points="309.5,478.2 377.9,478.2 376,487.2 377.9,521.3 305.9,517.7" fill="#dc3b3a"/><polygon points="305.9,517.7 377.9,521.3 377.7,522 386.8,551.7 388.7,559.1 322.7,557.4 322.7,543.6 304,542" fill="#dc3b3a"/><polygon points="322.7,557.4 388.7,559.1 392.5,560.4 396.5,569.8 398.8,605.1 320.3,596.9" fill="#dcdcdc"/><polygon points="309.5,596.9 398.8,598.8 398.8,605.1 399.6,641.9 377.9,638.3 341.9,631.1 340.1,604.1 309.5,604.1" fill="#dc3b3a"/><polygon points="309.5,604.1 340.1,604.1 341.9,631.1 377.9,638.3 399.6,641.9 404.3,643.5 405.1,650.6 405.9,671.7 409.8,681.1 406.7,695.2 394.1,699.5 374.3,713.9 367.1,744.4 343.7,731.8 327.5,699.5 302.3,695.9 286.1,677.9 266.3,661.7 304.1,661.7" fill="#dc3b3a"/><polygon points="372.6,441.3 390.7,440 391.3,436.1 393.9,436.8 394.5,443.9 408.7,445.8 421.7,451.6 439.7,451.6 430.7,457.5 416.5,471.7 412.6,483.3 412.6,494.9 426.8,505.2 428.8,512.3 379,512.3 377.9,478.2" fill="#dcdcdc"/><polygon points="416.5,471.7 430.7,466.5 435.9,471.7 455.2,478.1 460.4,487.2 457.8,494.9 460.4,523.3 434.6,523.3 428.8,512.3 426.8,505.2 412.6,494.9 412.6,483.3" fill="#dcdcdc"/><polygon points="435.9,471.7 452.7,458.7 457.8,458.7 451.4,465.2 460.4,469.1 479.8,464.6 496.6,473 486.2,474.2 470.7,478.1 460.4,487.2 455.2,478.1" fill="#dcdcdc"/><polygon points="472,479.4 482.4,475.5 500.4,484.6 501.7,498.8 497.9,502.7 510,500 510,529.8 473.3,531.1 477.2,518.2 472,497.5" fill="#dcdcdc"/><polygon points="379,512.3 428.8,512.3 430.7,515.6 434.6,523.3 439.7,532.4 432,538.8 430.7,549.1 386.8,551.7 377.7,522" fill="#dc3b3a"/><polygon points="434.6,523.3 464.9,523.3 465.5,540 467,571.4 463.1,587 453.7,594.9 447.4,587 441.2,576.1 438,571.4 428.6,555.7 430.7,549.1 432,538.8 439.7,532.4" fill="#1224d0"/><polygon points="386.8,551.7 430.7,549.1 428.6,555.7 438,571.4 441.2,576.1 447.4,587 453.7,594.9 452.1,602.7 442.7,609 442.7,604.3 398.8,605.1 396.5,569.8 392.5,560.4" fill="#dc3b3a"/><polygon points="398.8,605.1 442.7,604.3 442.7,609 449,610.6 445.9,623.1 436.5,637.2 435.7,649.8 405.1,650.6 404.3,643.5 399.6,641.9" fill="#dc3b3a"/><polygon points="405.1,650.6 435.7,649.8 438,659.2 431.7,674.9 453.7,676.4 455.3,684.3 458.4,689 461.5,700 442.7,700 427,692.9 408.2,692.1 409.8,681.1 405.9,671.7" fill="#dcdcdc"/><polygon points="445.9,623.1 466.2,622.3 467.8,681.1 455.3,684.3 453.7,676.4 431.7,674.9 438,659.2 435.7,649.8 436.5,637.2" fill="#dc3b3a"/><polygon points="466.2,622.3 492.9,620 510,648 510,681 478.8,674.9 477.2,681.9 467.8,681.1" fill="#dc3b3a"/><polygon points="492.9,620 510,618 510,648" fill="#dc3b3a"/><polygon points="478.8,674.9 510,670 510,681 477.2,681.9" fill="#dc3b3a"/><polygon points="452.1,602.7 510,598 510,618.4 445.9,623.1 449,610.6 442.7,609" fill="#dc3b3a"/><polygon points="453.7,594.9 463.1,587 467,583.9 481.9,580.8 488.2,571.4 496,565.1 510,563.5 510,598 452.1,602.7" fill="#dcdcdc"/><polygon points="465.5,540 464.9,523.3 473.3,531.1 510,529.8 510,563.5 496,565.1 488.2,571.4 481.9,580.8 467,583.9 467,571.4" fill="#dc3b3a"/><polygon points="138,677.4 148.1,681.1 172.2,683.9 185.2,745.9 190.7,745.9 203.7,755.2 226,773.7 229.6,766.3 210,752 190.7,745.9 177.8,747.8 163,743.1 153.7,745.9 144.4,758.9 133.3,770 110,782 83.3,790.4 60,792 42.6,788.5 60,790 90,786 118,773 133.3,758.9 116.7,758 107.4,745.9 111.1,729.3 122.2,721.9 105.6,710.7 122.2,705.2 113,692.2 125.9,681.1" fill="#dcdcdc"/></g><g fill="#1224d0" stroke="#1a1a6a" stroke-width="0.5"><ellipse cx="236" cy="715.3" rx="4.6" ry="3"/><polygon points="261,722 266,721.9 271,728 270,730.2 262,729"/><polygon points="277.8,731 287,732 286,734 278,733.8"/><polygon points="288.9,735 296,736 301.9,740 299,744 292,742"/><polygon points="301,749.6 313,750.6 324,764.4 307.4,775.6 303.7,768"/></g><g fill="none" stroke="#444" stroke-width="0.9"><path d="M190.7,746 L200,750 L212,757 L224,766 L229,770 L223,774 L214,766 L204,758 L196,752Z"/><path d="M205,752 L219,763 M209,757 L222,769 M200,749 L216,760"/></g><path d="M125.9,775.6 L110,782 L95,787 L75,790.5 L60,791.5 L45,789.5 L38,786 L28,780 L18,768" fill="none" stroke="#444" stroke-width="1" stroke-dasharray="3 2.5"/><path d="M153.7,745.9 L147,752 L140,760 L134,766 M160,744 L158,750" fill="none" stroke="#555" stroke-width="0.9"/><g fill="#555"><circle cx="16" cy="772" r="0.8"/><circle cx="30" cy="780" r="0.8"/><circle cx="96" cy="720" r="0.8"/><circle cx="85" cy="700" r="0.8"/><circle cx="112" cy="677" r="0.8"/><circle cx="193" cy="694" r="0.8"/><circle cx="218" cy="737" r="0.8"/><circle cx="231" cy="722" r="0.8"/><circle cx="16" cy="635" r="0.8"/><circle cx="138" cy="623" r="0.8"/><circle cx="88" cy="738" r="0.8"/><circle cx="138" cy="776" r="0.8"/><circle cx="150" cy="770" r="0.8"/></g></svg><!--/MAP-->
<!-- dock -->
<!--DOCK--><div class="a" style="left:1212px;top:159px;width:624px;height:925px;background:#313131"></div>
<div class="a" style="left:1212px;top:159px;width:11px;height:925px;background:#2c2c2c"></div>
<div class="a" style="left:1223px;top:162px;width:91px;height:42px;background:#363636;border:1px solid #474747;border-bottom:none;border-radius:6px 6px 0 0"></div>
<div class="a" style="left:1316px;top:166px;width:160px;height:37px;background:#2e2e2e;border:1px solid #434343;border-bottom:none;border-radius:6px 6px 0 0"></div>
<div class="a" style="left:1223px;top:203px;width:613px;height:1px;background:#434343"></div>
<div class="t" style="left:1241.0px;top:173.8px;font-size:20.5px;letter-spacing:0.5px;color:#ececec;">Items</div>
<div class="t" style="left:1333.0px;top:174.8px;font-size:20.5px;letter-spacing:0.55px;color:#ececec;">Undo History</div>
<div class="t" style="left:1228.0px;top:212.3px;font-size:17px;letter-spacing:0.8px;color:#e0e0e0;">Items</div>
<svg class="a" style="left:1799px;top:211px" width="40" height="19" viewBox="0 0 40 19"><g fill="none" stroke="#9a9a9a" stroke-width="1.2"><rect x="1" y="1" width="17" height="17" rx="2"/><rect x="4" y="4" width="8" height="8"/><path d="M7 4V1.5M12 9h3.5V4.5H7"/><rect x="23" y="1" width="17" height="17" rx="2"/><path d="M26 4l11 11M37 4L26 15" stroke-width="2.2"/></g></svg>
<div class="a" style="left:1223px;top:237px;width:613px;height:30px;background:linear-gradient(#3c3c3c,#363636);border-top:1px solid #4a4a4a;border-bottom:1px solid #1e1e1e"></div>
<div class="a" style="left:1264px;top:240px;width:1px;height:25px;background:#4c4c4c"></div>
<div class="a" style="left:1309px;top:240px;width:1px;height:25px;background:#4c4c4c"></div>
<svg class="a" style="left:1227px;top:243px" width="26" height="20" viewBox="0 0 26 20"><path d="M2 4.5Q13 -1 24 4" stroke="#bdbdbd" stroke-width="1.3" fill="none"/><path d="M1 11Q13 0 25 11Q13 22 1 11Z" fill="#e4e4e4"/><circle cx="13" cy="11" r="5.2" fill="#9a9a9a"/><circle cx="13" cy="11" r="2.5" fill="#222"/><circle cx="12" cy="9.8" r="1" fill="#eee"/></svg>
<svg class="a" style="left:1273px;top:241px" width="21" height="26" viewBox="0 0 21 26"><path d="M4.5 13V8Q4.5 1.5 10.5 1.5Q16.5 1.5 16.5 8V13" stroke="#d4d4d4" stroke-width="2.6" fill="none"/><rect x="1" y="12" width="19" height="12.5" rx="2" fill="#6e6e6e"/></svg>
<div class="t" style="left:1316.0px;top:243.8px;font-size:20.5px;letter-spacing:0.37px;color:#f0f0f0;">Item</div>
<div class="a" style="left:1223px;top:267px;width:613px;height:195px;background:#1d1d1d"></div>
<div class="a" style="left:1223px;top:269px;width:613px;height:28px;background:#1a1a1a"></div>
<div class="a" style="left:1223px;top:297px;width:613px;height:29px;background:#474747"></div>
<svg class="a" style="left:1318px;top:273px" width="23" height="21" viewBox="0 0 23 21"><g fill="#bcbcbc"><rect x="0" y="0.5" width="4" height="4"/><rect x="0" y="8.5" width="4" height="4"/><rect x="0" y="16.5" width="4" height="4"/></g><g fill="#cfcfcf"><rect x="6" y="1" width="11" height="3"/><rect x="6" y="9" width="17" height="3"/><rect x="6" y="17" width="8" height="3"/></g></svg>
<svg class="a" style="left:1318px;top:301px" width="23" height="21" viewBox="0 0 23 21"><g fill="#6f8aa8"><rect x="0" y="0.5" width="4" height="4"/><rect x="0" y="8.5" width="4" height="4"/><rect x="0" y="16.5" width="4" height="4"/></g><g fill="#8aa0b8"><rect x="6" y="1" width="11" height="3"/><rect x="6" y="9" width="17" height="3"/><rect x="6" y="17" width="8" height="3"/></g></svg>
<svg class="a" style="left:1318px;top:329px" width="24" height="21" viewBox="0 0 24 21"><defs><linearGradient id="mg" x1="0" x2="1"><stop offset="0" stop-color="#888"/><stop offset="0.3" stop-color="#ddd"/><stop offset="1" stop-color="#c8c8c8"/></linearGradient></defs><rect x="0.5" y="0.5" width="22" height="20" rx="1.5" fill="url(#mg)" stroke="#555"/></svg>
<div class="t" style="left:1352.0px;top:271.3px;font-size:20.5px;letter-spacing:0.64px;color:#ffffff;font-weight:bold;">&lt;Legend&gt;</div>
<div class="t" style="left:1352.0px;top:300.8px;font-size:20.5px;letter-spacing:0.7px;color:#f0f0f0;">test</div>
<div class="t" style="left:1352.0px;top:328.8px;font-size:20.5px;letter-spacing:0px;color:#f0f0f0;">Map 1</div>
<svg class="a" style="left:1520px;top:466px" width="30" height="4" viewBox="0 0 30 4"><g fill="#8a8a8a"><rect x="0" y="0" width="3" height="3"/><rect x="5" y="0" width="3" height="3"/><rect x="10" y="0" width="3" height="3"/><rect x="15" y="0" width="3" height="3"/><rect x="20" y="0" width="3" height="3"/><rect x="25" y="0" width="3" height="3"/></g></svg>
<div class="a" style="left:1240px;top:478px;width:85px;height:38px;background:#2e2e2e;border:1px solid #434343;border-bottom:none;border-radius:6px 6px 0 0"></div>
<div class="a" style="left:1327px;top:474px;width:186px;height:42px;background:#363636;border:1px solid #474747;border-bottom:none;border-radius:6px 6px 0 0"></div>
<div class="a" style="left:1515px;top:477px;width:103px;height:39px;background:#2e2e2e;border:1px solid #434343;border-bottom:none;border-radius:6px 6px 0 0"></div>
<div class="a" style="left:1223px;top:515px;width:613px;height:1px;background:#434343"></div>
<div class="t" style="left:1240.0px;top:485.8px;font-size:20.5px;letter-spacing:0.5px;color:#ececec;">Layout</div>
<div class="t" style="left:1343.5px;top:484.8px;font-size:20.5px;letter-spacing:0.69px;color:#ececec;">Item Properties</div>
<div class="t" style="left:1533.0px;top:486.3px;font-size:20.5px;letter-spacing:0.17px;color:#ececec;">Guides</div>
<div class="t" style="left:1219.0px;top:522.9px;font-size:19.5px;letter-spacing:0.5px;color:#e0e0e0;">Item Properties</div>
<svg class="a" style="left:1799px;top:524px" width="40" height="19" viewBox="0 0 40 19"><g fill="none" stroke="#9a9a9a" stroke-width="1.2"><rect x="1" y="1" width="17" height="17" rx="2"/><rect x="4" y="4" width="8" height="8"/><path d="M7 4V1.5M12 9h3.5V4.5H7"/><rect x="23" y="1" width="17" height="17" rx="2"/><path d="M26 4l11 11M37 4L26 15" stroke-width="2.2"/></g></svg>
<div class="a" style="left:1223px;top:547px;width:613px;height:33px;background:#cbcbcb"></div>
<div class="a" style="left:1223px;top:580px;width:613px;height:504px;background:#313131"></div>
<div class="a" style="left:1222px;top:580px;width:21px;height:504px;background:#2c2c2c;border-left:1px solid #242424"></div>
<div class="a" style="left:1243px;top:580px;width:1.5px;height:504px;background:#3c3c3c"></div>
<div class="a" style="left:1800px;top:580px;width:1px;height:504px;background:#272727"></div>
<div class="a" style="left:1819px;top:580px;width:17px;height:504px;background:#2c2c2c;border-left:1px solid #3a3a3a"></div>
<div class="a" style="left:1820px;top:581px;width:16px;height:20px;background:#3c3c3c;border:1px solid #4a4a4a"></div>
<svg class="a" style="left:1822px;top:585px" width="14" height="10" viewBox="0 0 14 10"><path d="M1 8L7 2L13 8Z" fill="#c8c8c8"/></svg>
<div class="a" style="left:1820px;top:864px;width:16px;height:125px;background:#3a3a3a;border:1px solid #474747;border-radius:2px"></div>
<div class="a" style="left:1442px;top:593px;width:335px;height:36px;background:linear-gradient(#474747,#3d3d3d);border:1px solid #545454;border-radius:4px;box-shadow:0 1px 1px rgba(0,0,0,0.5)"></div><svg class="a" style="left:1753px;top:607px" width="14" height="8" viewBox="0 0 14 8"><path d="M1 1H13L7 7Z" fill="#111"/></svg>
<div class="t" style="left:1481.0px;top:601.3px;font-size:20.5px;letter-spacing:0.4px;color:#141414;">Left</div>
<div class="t" style="left:1263.0px;top:601.3px;font-size:20.5px;letter-spacing:0.5px;color:#f0f0f0;">Alignment</div>
<div class="t" style="left:1263.0px;top:640.8px;font-size:20.5px;letter-spacing:0.4px;color:#f6f6f6;font-weight:bold;">Group Headings</div>
<div class="a" style="left:1442px;top:676px;width:316px;height:33px;background:linear-gradient(#474747,#3d3d3d);border:1px solid #545454;border-radius:4px;box-shadow:0 1px 1px rgba(0,0,0,0.5)"></div><div class="a" style="left:1761px;top:676px;width:16px;height:33px;background:linear-gradient(#474747,#3d3d3d);border:1px solid #545454;border-radius:3px;box-shadow:0 1px 1px rgba(0,0,0,0.5)"></div><svg class="a" style="left:1763px;top:688px" width="12" height="8" viewBox="0 0 12 8"><path d="M0.5 1H11.5L6 7Z" fill="#e0e0e0"/></svg>
<div class="t" style="left:1453.0px;top:681.8px;font-size:20.5px;letter-spacing:0.4px;color:#141414;">Group font</div>
<div class="t" style="left:1263.0px;top:681.8px;font-size:20.5px;letter-spacing:0.5px;color:#f0f0f0;">Font</div>
<div class="a" style="left:1442px;top:721px;width:335px;height:35px;background:linear-gradient(#474747,#3d3d3d);border:1px solid #545454;border-radius:4px;box-shadow:0 1px 1px rgba(0,0,0,0.5)"></div><svg class="a" style="left:1753px;top:734px" width="14" height="8" viewBox="0 0 14 8"><path d="M1 1H13L7 7Z" fill="#111"/></svg>
<div class="t" style="left:1481.0px;top:728.8px;font-size:20.5px;letter-spacing:0.4px;color:#141414;">Left</div>
<div class="t" style="left:1263.0px;top:728.8px;font-size:20.5px;letter-spacing:0.5px;color:#f0f0f0;">Alignment</div>
<div class="t" style="left:1263.0px;top:768.8px;font-size:20.5px;letter-spacing:0.4px;color:#f6f6f6;font-weight:bold;">Subgroup Headings</div>
<div class="a" style="left:1442px;top:803px;width:316px;height:33px;background:linear-gradient(#474747,#3d3d3d);border:1px solid #545454;border-radius:4px;box-shadow:0 1px 1px rgba(0,0,0,0.5)"></div><div class="a" style="left:1761px;top:803px;width:16px;height:33px;background:linear-gradient(#474747,#3d3d3d);border:1px solid #545454;border-radius:3px;box-shadow:0 1px 1px rgba(0,0,0,0.5)"></div><svg class="a" style="left:1763px;top:815px" width="12" height="8" viewBox="0 0 12 8"><path d="M0.5 1H11.5L6 7Z" fill="#e0e0e0"/></svg>
<div class="t" style="left:1453.0px;top:809.8px;font-size:20.5px;letter-spacing:0.4px;color:#141414;">Subgroup font</div>
<div class="t" style="left:1263.0px;top:809.8px;font-size:20.5px;letter-spacing:0.5px;color:#f0f0f0;">Font</div>
<div class="a" style="left:1442px;top:848px;width:335px;height:36px;background:linear-gradient(#474747,#3d3d3d);border:1px solid #545454;border-radius:4px;box-shadow:0 1px 1px rgba(0,0,0,0.5)"></div><svg class="a" style="left:1753px;top:862px" width="14" height="8" viewBox="0 0 14 8"><path d="M1 1H13L7 7Z" fill="#111"/></svg>
<div class="t" style="left:1481.0px;top:855.8px;font-size:20.5px;letter-spacing:0.4px;color:#141414;">Left</div>
<div class="t" style="left:1263.0px;top:855.8px;font-size:20.5px;letter-spacing:0.5px;color:#f0f0f0;">Alignment</div>
<div class="t" style="left:1263.0px;top:895.3px;font-size:20.5px;letter-spacing:0.4px;color:#f6f6f6;font-weight:bold;">Item Labels</div>
<div class="a" style="left:1442px;top:931px;width:316px;height:32px;background:linear-gradient(#474747,#3d3d3d);border:1px solid #545454;border-radius:4px;box-shadow:0 1px 1px rgba(0,0,0,0.5)"></div><div class="a" style="left:1761px;top:931px;width:16px;height:32px;background:linear-gradient(#474747,#3d3d3d);border:1px solid #545454;border-radius:3px;box-shadow:0 1px 1px rgba(0,0,0,0.5)"></div><svg class="a" style="left:1763px;top:943px" width="12" height="8" viewBox="0 0 12 8"><path d="M0.5 1H11.5L6 7Z" fill="#e0e0e0"/></svg>
<div class="t" style="left:1452.0px;top:933.0px;font-size:19px;letter-spacing:0.9px;color:#1a1a1a;font-family:'Liberation Serif',serif;-webkit-text-stroke:0.5px #1a1a1a;">Item font</div>
<div class="t" style="left:1263.0px;top:936.3px;font-size:20.5px;letter-spacing:0.5px;color:#f0f0f0;">Font</div>
<div class="a" style="left:1442px;top:975px;width:335px;height:36px;background:linear-gradient(#474747,#3d3d3d);border:1px solid #545454;border-radius:4px;box-shadow:0 1px 1px rgba(0,0,0,0.5)"></div><svg class="a" style="left:1753px;top:989px" width="14" height="8" viewBox="0 0 14 8"><path d="M1 1H13L7 7Z" fill="#111"/></svg>
<div class="t" style="left:1481.0px;top:982.8px;font-size:20.5px;letter-spacing:0.4px;color:#141414;">Left</div>
<div class="t" style="left:1263.0px;top:982.3px;font-size:20.5px;letter-spacing:0.5px;color:#f0f0f0;">Alignment</div>
<div class="a" style="left:1442px;top:1023px;width:316px;height:41px;background:linear-gradient(#474747,#3d3d3d);border:1px solid #545454;border-radius:4px;box-shadow:0 1px 1px rgba(0,0,0,0.5)"></div><div class="a" style="left:1761px;top:1023px;width:16px;height:41px;background:linear-gradient(#474747,#3d3d3d);border:1px solid #545454;border-radius:3px;box-shadow:0 1px 1px rgba(0,0,0,0.5)"></div><svg class="a" style="left:1763px;top:1039px" width="12" height="8" viewBox="0 0 12 8"><path d="M0.5 1H11.5L6 7Z" fill="#e0e0e0"/></svg>
<div class="a" style="left:1449px;top:1031px;width:302px;height:25px;background:#000;border-radius:4px"></div>
<div class="t" style="left:1263.0px;top:1032.8px;font-size:20.5px;letter-spacing:0.5px;color:#f0f0f0;">Font color</div><!--/DOCK-->
<!--DIALOG--><div class="a" style="left:504px;top:279px;width:795px;height:616px;border-radius:12px;box-shadow:0 36px 64px 2px rgba(0,0,0,0.62),0 0 0 1px rgba(0,0,0,0.6)"></div>
<div class="a" style="left:504px;top:279px;width:795px;height:616px;background:#313131;border-radius:12px;overflow:hidden;border:1px solid #4a4a4a;border-top-color:#777"></div>
<div class="a" style="left:505px;top:280px;width:793px;height:43px;background:#363636;border-radius:11px 11px 0 0"></div>
<div class="a" style="left:505px;top:323px;width:793px;height:1px;background:#1f1f1f"></div>
<div class="a" style="left:516.6px;top:290.8px;width:19.6px;height:19.6px;border-radius:50%;background:#ec6a5e"></div>
<div class="a" style="left:547.9px;top:290.8px;width:19.6px;height:19.6px;border-radius:50%;background:#5b5a5c"></div>
<div class="a" style="left:580.1px;top:290.8px;width:19.6px;height:19.6px;border-radius:50%;background:#61c554"></div>
<div class="t" style="left:840.6px;top:289.8px;font-size:20.5px;letter-spacing:0.45px;color:#a9a9a9;font-weight:bold;">Text Format</div>
<div class="t" style="left:525.3px;top:343.8px;font-size:20.5px;letter-spacing:0.1px;color:#f2f2f2;">Font</div>
<div class="a" style="left:525px;top:363px;width:11px;height:1.5px;background:#e0e0e0"></div>
<div class="a" style="left:523px;top:367px;width:384px;height:36px;background:#1c1c1c;border:2px solid #34567e;border-radius:5px"></div>
<div class="a" style="left:526px;top:372px;width:229px;height:26px;background:#3d6090"></div>
<div class="t" style="left:527.0px;top:374.2px;font-size:20.5px;letter-spacing:0.24px;color:#ffffff;">Academy Engraved LET</div>
<div class="a" style="left:523px;top:405px;width:384px;height:184px;background:#1f1f1f"></div>
<div class="a" style="left:523px;top:406px;width:362px;height:24px;background:#464646"></div>
<div class="a" style="left:523px;top:405px;width:362px;height:184px;overflow:hidden"><div class="t" style="left:5.0px;top:2.6px;font-size:19.2px;letter-spacing:0.15px;color:#f0f0f0;">Academy Engraved LET</div><div class="t" style="left:5.0px;top:26.6px;font-size:19.2px;letter-spacing:0.15px;color:#f0f0f0;">Al Bayan</div><div class="t" style="left:5.0px;top:50.6px;font-size:19.2px;letter-spacing:0.15px;color:#f0f0f0;">Al Nile</div><div class="t" style="left:5.0px;top:74.6px;font-size:19.2px;letter-spacing:0.15px;color:#f0f0f0;">Al Tarikh</div><div class="t" style="left:5.0px;top:98.6px;font-size:19.2px;letter-spacing:0.15px;color:#f0f0f0;">American Typewriter</div><div class="t" style="left:5.0px;top:122.6px;font-size:19.2px;letter-spacing:0.15px;color:#f0f0f0;">Andale Mono</div><div class="t" style="left:5.0px;top:146.6px;font-size:19.2px;letter-spacing:0.15px;color:#f0f0f0;">Apple Braille</div><div class="t" style="left:5.0px;top:170.6px;font-size:19.2px;letter-spacing:0.15px;color:#f0f0f0;">Apple Chancery</div></div>
<div class="a" style="left:885px;top:405px;width:21px;height:184px;background:#2a2a2a;border-left:1px solid #353535"></div><div class="a" style="left:886px;top:406px;width:20px;height:20px;background:#3a3a3a;border:1px solid #4a4a4a;border-radius:2px"></div><svg class="a" style="left:889px;top:411px" width="14" height="9" viewBox="0 0 14 9"><path d="M1 8L7 1.5L13 8Z" fill="#cfcfcf"/></svg><div class="a" style="left:886px;top:428px;width:20px;height:41px;background:#3a3a3a;border:1px solid #4a4a4a;border-radius:2px"></div><div class="a" style="left:886px;top:567px;width:20px;height:20px;background:#3a3a3a;border:1px solid #4a4a4a;border-radius:2px"></div><svg class="a" style="left:889px;top:572px" width="14" height="9" viewBox="0 0 14 9"><path d="M1 1H13L7 7.5Z" fill="#cfcfcf"/></svg>
<div class="t" style="left:921.0px;top:343.3px;font-size:20.5px;letter-spacing:0.31px;color:#f2f2f2;">Font style</div>
<div class="a" style="left:980px;top:363.5px;width:13px;height:1.5px;background:#e0e0e0"></div>
<div class="a" style="left:918px;top:367px;width:243px;height:36px;background:#1e1e1e;border-radius:3px"></div>
<div class="t" style="left:922.7px;top:374.2px;font-size:20.5px;letter-spacing:0.3px;color:#f4f4f4;">Plain</div>
<div class="a" style="left:918px;top:405px;width:243px;height:184px;background:#1f1f1f"></div>
<div class="a" style="left:919px;top:406px;width:241px;height:24px;background:#474747"></div>
<div class="t" style="left:924.0px;top:407.6px;font-size:19.2px;letter-spacing:0.15px;color:#f4f4f4;">Plain</div>
<div class="t" style="left:1174.2px;top:343.3px;font-size:20.5px;letter-spacing:0.2px;color:#f2f2f2;">Size</div>
<div class="a" style="left:1174px;top:363px;width:12px;height:1.5px;background:#e0e0e0"></div>
<div class="a" style="left:1171px;top:367px;width:110px;height:36px;background:#1e1e1e;border-radius:3px"></div>
<div class="t" style="left:1176.0px;top:374.2px;font-size:20.5px;letter-spacing:0.2px;color:#f4f4f4;">14</div>
<div class="a" style="left:1171px;top:405px;width:88px;height:184px;background:#1f1f1f"></div>
<div class="a" style="left:1172px;top:525.5px;width:86px;height:23px;background:#2d62d6"></div>
<div class="a" style="left:1171px;top:405px;width:87px;height:184px;overflow:hidden"><div class="t" style="left:5.0px;top:2.6px;font-size:19.2px;letter-spacing:0.15px;color:#f4f4f4;">9</div><div class="t" style="left:5.0px;top:26.6px;font-size:19.2px;letter-spacing:0.15px;color:#f4f4f4;">10</div><div class="t" style="left:5.0px;top:50.6px;font-size:19.2px;letter-spacing:0.15px;color:#f4f4f4;">11</div><div class="t" style="left:5.0px;top:74.6px;font-size:19.2px;letter-spacing:0.15px;color:#f4f4f4;">12</div><div class="t" style="left:5.0px;top:98.6px;font-size:19.2px;letter-spacing:0.15px;color:#f4f4f4;">13</div><div class="t" style="left:5.0px;top:122.6px;font-size:19.2px;letter-spacing:0.15px;color:#f4f4f4;">14</div><div class="t" style="left:5.0px;top:146.6px;font-size:19.2px;letter-spacing:0.15px;color:#f4f4f4;">18</div><div class="t" style="left:5.0px;top:170.6px;font-size:19.2px;letter-spacing:0.15px;color:#f4f4f4;">24</div></div>
<div class="a" style="left:1258px;top:405px;width:21px;height:184px;background:#2a2a2a;border-left:1px solid #353535"></div><div class="a" style="left:1259px;top:406px;width:20px;height:20px;background:#3a3a3a;border:1px solid #4a4a4a;border-radius:2px"></div><svg class="a" style="left:1262px;top:411px" width="14" height="9" viewBox="0 0 14 9"><path d="M1 8L7 1.5L13 8Z" fill="#cfcfcf"/></svg><div class="a" style="left:1259px;top:428px;width:20px;height:63px;background:#3a3a3a;border:1px solid #4a4a4a;border-radius:2px"></div><div class="a" style="left:1259px;top:567px;width:20px;height:20px;background:#3a3a3a;border:1px solid #4a4a4a;border-radius:2px"></div><svg class="a" style="left:1262px;top:572px" width="14" height="9" viewBox="0 0 14 9"><path d="M1 1H13L7 7.5Z" fill="#cfcfcf"/></svg>
<div class="t" style="left:522.3px;top:612.1px;font-size:20.5px;letter-spacing:0.67px;color:#f2f2f2;">Effects</div>
<div class="a" style="left:523px;top:640px;width:384px;height:115px;background:#2f2f2f;border:1px solid #3a3a3a;border-radius:5px"></div>
<div class="a" style="left:541px;top:664px;width:21px;height:20px;background:#202020;border-radius:3px"></div>
<div class="a" style="left:541px;top:708.5px;width:21px;height:20.5px;background:#202020;border-radius:3px"></div>
<div class="t" style="left:571.0px;top:663.8px;font-size:20.5px;letter-spacing:0.77px;color:#eeeeee;">Strikeout</div>
<div class="a" style="left:604px;top:686px;width:10px;height:1.5px;background:#d8d8d8"></div>
<div class="t" style="left:571.0px;top:708.3px;font-size:20.5px;letter-spacing:0.6px;color:#eeeeee;">Underline</div>
<div class="a" style="left:571px;top:730px;width:15px;height:1.5px;background:#d8d8d8"></div>
<div class="t" style="left:525.0px;top:758.3px;font-size:20.5px;letter-spacing:0.59px;color:#f2f2f2;">Writing System</div>
<div class="a" style="left:553px;top:780px;width:6px;height:1.5px;background:#d8d8d8"></div>
<div class="a" style="left:523px;top:786px;width:384px;height:35px;background:linear-gradient(#474747,#3b3b3b);border:1px solid #545454;border-radius:5px;box-shadow:0 1px 1px rgba(0,0,0,0.5)"></div>
<div class="t" style="left:531.0px;top:793.3px;font-size:20.5px;letter-spacing:0.4px;color:#141414;">Any</div>
<svg class="a" style="left:884px;top:800px" width="13" height="7" viewBox="0 0 13 7"><path d="M0.5 0.5H12.5L6.5 6.5Z" fill="#111"/></svg>
<div class="t" style="left:918.0px;top:611.2px;font-size:20.5px;letter-spacing:0.5px;color:#f2f2f2;">Sample</div>
<div class="a" style="left:920px;top:641px;width:361px;height:181px;background:#2f2f2f;border:1px solid #3a3a3a;border-radius:5px"></div>
<div class="a" style="left:937px;top:657.5px;width:326px;height:145px;background:#1e1e1e;border-radius:5px"></div>
<div class="t" style="left:1047.5px;top:713.9px;font-size:22.5px;letter-spacing:-0.2px;color:#f0f0f0;font-family:'Liberation Serif',serif;-webkit-text-stroke:0.7px #f0f0f0;">AaBbYyZz</div>
<div class="a" style="left:1019px;top:842px;width:125px;height:35px;background:linear-gradient(#4a4a4a,#404040);border:1px solid #232323;border-radius:5px;box-shadow:inset 0 1px 0 #575757"></div>
<div class="t" style="left:1049.5px;top:848.8px;font-size:20.5px;letter-spacing:0.1px;color:#f2f2f2;">Cancel</div>
<div class="a" style="left:1155px;top:841px;width:127px;height:37px;background:linear-gradient(#525762,#474b54);border:2px solid #5a9de6;border-radius:5px"></div>
<div class="t" style="left:1204.5px;top:848.8px;font-size:20.5px;letter-spacing:-0.8px;color:#f2f2f2;">OK</div>
<div class="a" style="left:509px;top:284px;width:770px;height:600px;border:3.5px solid #ea442b"></div>
<div class="a" style="left:512.5px;top:287.5px;width:763px;height:593px;border:1px solid #1b3a3e"></div>
<svg class="a" style="left:1276px;top:871px" width="22" height="22" viewBox="0 0 22 22"><g fill="#8a8a8a"><rect x="16" y="4" width="2.5" height="2.5"/><rect x="12" y="8" width="2.5" height="2.5"/><rect x="16" y="8" width="2.5" height="2.5"/><rect x="8" y="12" width="2.5" height="2.5"/><rect x="12" y="12" width="2.5" height="2.5"/><rect x="16" y="12" width="2.5" height="2.5"/><rect x="4" y="16" width="2.5" height="2.5"/><rect x="8" y="16" width="2.5" height="2.5"/><rect x="12" y="16" width="2.5" height="2.5"/><rect x="16" y="16" width="2.5" height="2.5"/></g><g fill="#4a4a4a"><rect x="18" y="6" width="2" height="2"/><rect x="14" y="10" width="2" height="2"/><rect x="18" y="10" width="2" height="2"/><rect x="10" y="14" width="2" height="2"/><rect x="14" y="14" width="2" height="2"/><rect x="18" y="14" width="2" height="2"/><rect x="6" y="18" width="2" height="2"/><rect x="10" y="18" width="2" height="2"/><rect x="14" y="18" width="2" height="2"/><rect x="18" y="18" width="2" height="2"/></g></svg><!--/DIALOG-->
</body></html>
